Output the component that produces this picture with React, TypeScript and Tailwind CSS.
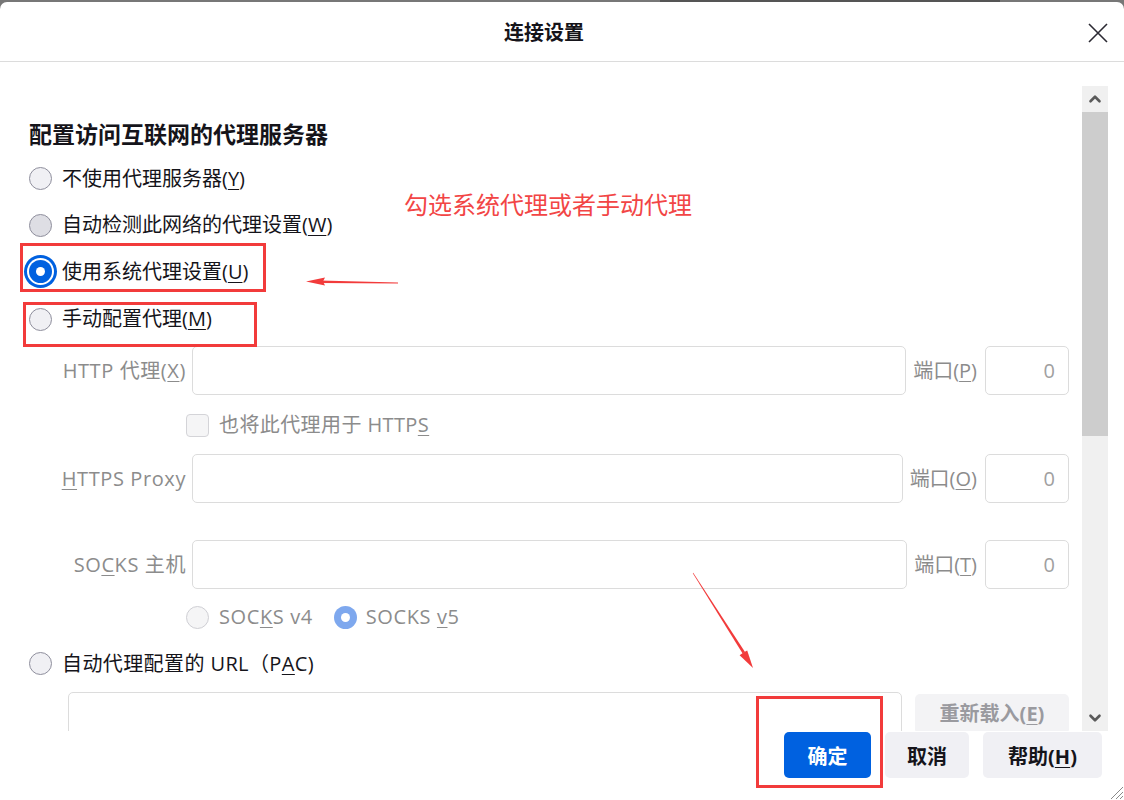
import React from "react";
import clsx from "clsx";
import { ChevronUp, ChevronDown } from "lucide-react";

function Key({ children }: { children: React.ReactNode }) {
  return <span className="underline decoration-1 underline-offset-[3px]">{children}</span>;
}

function Radio({ checked, disabled, hover }: { checked?: boolean; disabled?: boolean; hover?: boolean }) {
  if (checked) {
    return (
      <span
        className={clsx(
          "flex h-[23px] w-[23px] shrink-0 items-center justify-center rounded-full",
          disabled ? "bg-[#7ea8ee]" : "bg-[#0061e0] ring-[3px] ring-[#0061e0] ring-offset-2"
        )}
      >
        <span className="h-[9px] w-[9px] rounded-full bg-white" />
      </span>
    );
  }
  return (
    <span
      className={clsx(
        "h-[23px] w-[23px] shrink-0 rounded-full border",
        disabled ? "border-[#cfcfd4] bg-[#f5f5f6]" : "border-[#8f8f9d]",
        !disabled && (hover ? "bg-[#dedee4]" : "bg-[#f0f0f4]")
      )}
    />
  );
}

function ProxyRow({ label, portLabel }: { label: React.ReactNode; portLabel: React.ReactNode }) {
  return (
    <div className="flex h-[49px] items-stretch text-[20px] text-[#8c8c8c]">
      <div className="flex w-[157px] shrink-0 items-center justify-end whitespace-nowrap tracking-[0.6px]">{label}</div>
      <div className="ml-[6px] flex-1 rounded-[5px] border border-[#dcdcdc] bg-white" />
      <div className="ml-[7px] mr-[8px] flex items-center whitespace-nowrap">{portLabel}</div>
      <div className="flex w-[84px] shrink-0 items-center justify-end rounded-[5px] border border-[#dcdcdc] pr-[13px] text-[#a0a0a0]">
        0
      </div>
    </div>
  );
}

export default function App() {
  return (
    <div className="relative h-[800px] w-[1124px] overflow-hidden bg-[#777777] font-['Open_Sans','Noto_Sans_CJK_SC',sans-serif] text-[#15141a]">
      <div className="absolute left-[660px] top-0 h-[2px] w-[340px] bg-[#555555]" />
      <div className="mt-[2px] flex h-[798px] flex-col rounded-t-[7px] bg-white">
        {/* Header */}
        <div className="flex h-[60px] shrink-0 items-center border-b border-[#dcdcdc] pt-[3px]">
          <div className="flex-1 text-center text-[20px] font-bold">连接设置</div>
          <svg width="20" height="20" viewBox="0 0 20 20" className="mr-[16px] text-[#2b2a33]">
            <path d="M1 1L19 19M19 1L1 19" stroke="currentColor" strokeWidth="1.6" />
          </svg>
        </div>

        {/* Content */}
        <div className="flex h-[669px] shrink-0 overflow-hidden">
          <div className="flex-1 pl-[29px] pr-[13px] pt-[57px]">
            <h2 className="h-[30px] text-[23px] font-bold leading-[30px]">配置访问互联网的代理服务器</h2>

            <div className="mt-[6px] flex h-[47px] items-center gap-[10px] text-[20px]">
              <Radio />
              <span>
                不使用代理服务器(<Key>Y</Key>)
              </span>
            </div>
            <div className="flex h-[46px] items-center gap-[10px] text-[20px]">
              <Radio hover />
              <span>
                自动检测此网络的代理设置(<Key>W</Key>)
              </span>
            </div>
            <div className="flex h-[47px] items-center gap-[10px] text-[20px]">
              <Radio checked />
              <span>
                使用系统代理设置(<Key>U</Key>)
              </span>
            </div>
            <div className="flex h-[48px] items-center gap-[10px] text-[20px]">
              <Radio />
              <span>
                手动配置代理(<Key>M</Key>)
              </span>
            </div>

            <div className="mt-[3px]">
              <ProxyRow
                label={
                  <>
                    HTTP 代理(<Key>X</Key>)
                  </>
                }
                portLabel={
                  <>
                    端口(<Key>P</Key>)
                  </>
                }
              />
            </div>

            <div className="mt-[15px] flex h-[30px] items-center gap-[10px] pl-[157px] text-[20px] tracking-[0.4px] text-[#8c8c8c]">
              <span className="h-[23px] w-[23px] rounded-[4px] border border-[#d4d4d8] bg-[#f5f5f6]" />
              <span>
                也将此代理用于 HTTP<Key>S</Key>
              </span>
            </div>

            <div className="mt-[14px]">
              <ProxyRow
                label={
                  <>
                    <Key>H</Key>TTPS Proxy
                  </>
                }
                portLabel={
                  <>
                    端口(<Key>O</Key>)
                  </>
                }
              />
            </div>

            <div className="mt-[37px]">
              <ProxyRow
                label={
                  <>
                    SO<Key>C</Key>KS 主机
                  </>
                }
                portLabel={
                  <>
                    端口(<Key>T</Key>)
                  </>
                }
              />
            </div>

            <div className="mt-[13px] flex h-[30px] items-center pl-[157px] text-[20px] tracking-[0.6px] text-[#8c8c8c]">
              <Radio disabled />
              <span className="ml-[10px]">
                SOC<Key>K</Key>S v4
              </span>
              <span className="ml-[21px]">
                <Radio checked disabled />
              </span>
              <span className="ml-[9px]">
                SOCKS <Key>v</Key>5
              </span>
            </div>

            <div className="mt-[8px] flex h-[47px] items-center gap-[10px] text-[20px]">
              <Radio />
              <span className="tracking-[0.4px]">
                自动代理配置的 URL（P<Key>A</Key>C)
              </span>
            </div>

            <div className="mt-[5px] flex items-start pl-[39px]">
              <div className="h-[44px] flex-1 rounded-[5px] border border-[#dcdcdc]" />
              <div className="ml-[13px] mt-[2px] flex h-[40px] w-[154px] items-center justify-center rounded-[5px] bg-[#f3f3f5] text-[20px] font-bold text-[#9a9a9f]">
                重新载入(<Key>E</Key>)
              </div>
            </div>
          </div>

          {/* Scrollbar */}
          <div className="mr-[16px] mt-[24px] flex w-[26px] shrink-0 flex-col bg-[#f0f0f0]">
            <div className="flex h-[26px] items-center justify-center">
              <ChevronUp size={18} strokeWidth={3.5} className="text-[#5a5a5a]" />
            </div>
            <div className="h-[324px] bg-[#cdcdcd]" />
            <div className="flex-1" />
            <div className="flex h-[27px] items-center justify-center">
              <ChevronDown size={18} strokeWidth={3.5} className="text-[#5a5a5a]" />
            </div>
          </div>
        </div>

        {/* Footer */}
        <div className="flex flex-1 items-start justify-end gap-[14px] pr-[22px] pt-[1px] text-[20px] font-bold">
          <div className="flex h-[46px] w-[87px] items-center justify-center rounded-[5px] bg-[#0061e0] pt-[3px] text-white">确定</div>
          <div className="flex h-[46px] w-[84px] items-center justify-center rounded-[5px] bg-[#f0f0f4] pt-[3px]">取消</div>
          <div className="flex h-[46px] w-[119px] items-center justify-center rounded-[5px] bg-[#f0f0f4] pt-[3px]">
            帮助(<Key>H</Key>)
          </div>
        </div>
      </div>

      {/* Resize grip */}
      <svg className="absolute bottom-0 right-0" width="16" height="16" viewBox="0 0 16 16">
        <path d="M15 3L3 15M15 8L8 15M15 12L12 15" stroke="#8a8a8a" strokeWidth="1" />
      </svg>

      {/* Annotations */}
      <div className="absolute left-[20px] top-[243px] h-[49px] w-[246px] border-[3px] border-[#f23b3b]" />
      <div className="absolute left-[23px] top-[302px] h-[45px] w-[234px] border-[3px] border-[#f23b3b]" />
      <div className="absolute left-[756px] top-[696px] h-[92px] w-[127px] border-[3px] border-[#f23b3b]" />
      <div className="absolute left-[404px] top-[189px] text-[24px] leading-[32px] text-[#f24545]">勾选系统代理或者手动代理</div>
      <svg className="pointer-events-none absolute left-0 top-0" width="1124" height="800">
        <polygon points="398,282.6 398,283.4 320,283 320,280.4" fill="#f23b3b" />
        <polygon points="306,281.5 325,277.5 323,281.6 325,285.5" fill="#f23b3b" />
        <polygon points="692.8,573.2 693.2,572.8 745,652 742.6,653.6" fill="#f23b3b" />
        <polygon points="753,668 739.6,655.2 743.5,652.5 747.2,650.4" fill="#f23b3b" />
      </svg>
    </div>
  );
}
